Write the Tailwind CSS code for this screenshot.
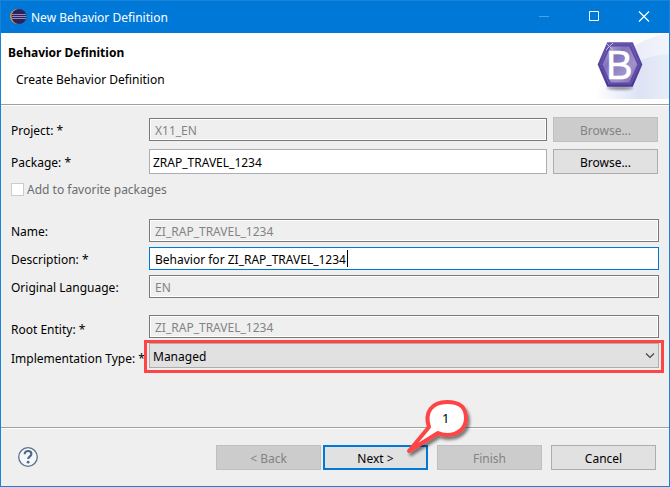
<!DOCTYPE html>
<html lang="en">
<head>
<meta charset="utf-8">
<meta name="viewport" content="width=device-width, initial-scale=1">
<title>New Behavior Definition</title>
<script src="https://cdn.jsdelivr.net/npm/@tailwindcss/browser@4"></script>
</head>
<body class="flex min-h-screen flex-col border border-[#1883d7] bg-[#efefef] font-['Noto_Sans',sans-serif] text-[12px] leading-[16px] text-black">

<header class="flex h-8 items-center bg-[#0078d7] pl-2 text-white">
  <svg class="mr-1 size-[18px]" viewBox="0 0 18 18" aria-hidden="true">
    <circle cx="8.500" cy="8.500" r="7.500" fill="#d98e48"/>
    <circle cx="10" cy="8.500" r="7.500" fill="#2c2255"/>
    <path d="M3 6.500h14M2.500 8.500h15M3 10.500h14" stroke="#8d8bbd" stroke-width="1"/>
  </svg>
  <h1 class="grow pt-0.5">New Behavior Definition</h1>
  <button type="button" aria-label="Minimize" disabled class="flex h-8 w-[50px] items-center justify-center">
    <svg class="size-3" viewBox="0 0 12 12" fill="none" stroke="#4ba0e6"><path d="M1 5.500h10"/></svg>
  </button>
  <button type="button" aria-label="Maximize" class="flex h-8 w-[50px] items-center justify-center">
    <svg class="size-3" viewBox="0 0 12 12" fill="none" stroke="#fff"><path d="M1.500 .5h9v9h-9z"/></svg>
  </button>
  <button type="button" aria-label="Close" class="flex h-8 w-[50px] items-center justify-center">
    <svg class="size-3" viewBox="0 0 12 12" fill="none" stroke="#fff" stroke-width="1.200"><path d="M1 .5l10 10M11 .5L1 10.500"/></svg>
  </button>
</header>

<section class="flex justify-between border-b border-[#a0a0a0] bg-white">
  <div class="pt-3 pl-[7px]">
    <h2 class="font-bold">Behavior Definition</h2>
    <p class="mt-[11px] pl-2">Create Behavior Definition</p>
  </div>
  <svg class="mb-[5px] h-[66px] w-[75px]" viewBox="0 0 75 66" aria-hidden="true">
    <defs>
      <linearGradient id="haze" x1="0" x2="1"><stop offset="0" stop-color="#fff"/><stop offset=".6" stop-color="#dde3f5"/><stop offset="1" stop-color="#e9edf9"/></linearGradient>
      <linearGradient id="rim" x1="0" y1="0" x2="0" y2="1"><stop offset="0" stop-color="#6650ad"/><stop offset="1" stop-color="#4b3794"/></linearGradient>
      <linearGradient id="face" x1="0" y1="0" x2="1" y2="1"><stop offset="0" stop-color="#c5bddf"/><stop offset=".35" stop-color="#8173bd"/><stop offset=".65" stop-color="#9f93cd"/><stop offset="1" stop-color="#6b57ac"/></linearGradient>
      <filter id="soft" x="-30%" y="-100%" width="160%" height="300%"><feGaussianBlur stdDeviation="1.200"/></filter>
    </defs>
    <path d="M0 66C9 40 25 10 75 0V66z" fill="url(#haze)" opacity=".6"/>
    <path d="M1 66C16 42 38 24 75 21V66z" fill="url(#haze)"/>
    <ellipse cx="26" cy="55" rx="13" ry="2" fill="#4b4b5a" opacity=".55" filter="url(#soft)"/>
    <path d="M14 10.500h24L47 31.500 38 52.500H14L5 31.500z" fill="url(#face)" stroke="url(#rim)" stroke-width="2.500"/>
    <path d="M16 12.500h20l8.500 19-8.500 19H16L7.500 31.500z" fill="none" stroke="#5d4aa4" stroke-width="2"/>
    <text x="12" y="45.500" font-family="Liberation Sans, sans-serif" font-size="40" fill="#fff" stroke="#fff" stroke-width=".5">B</text>
    <path d="M12 10l7 7M19 10l-7 7" stroke="#c9c1e5" stroke-width="1"/>
  </svg>
</section>

<form class="flex grow flex-col border-t border-white">
  <div class="grow px-[10px] pt-[11px] pb-[58px]">
    <div class="flex items-center">
      <label for="project" class="w-[138px] shrink-0 pt-0.5">Project: *</label>
      <input id="project" value="X11_EN" disabled class="h-[23px] min-w-0 grow border border-[#7a7a7a] bg-[#efefef] px-[5px] pt-0.5 text-[#838383] inset-ring inset-ring-white">
      <button type="button" disabled class="mr-px ml-1.5 h-[25px] w-[105px] shrink-0 border border-[#bfbfbf] bg-[#cccccc] pt-0.5 text-[#838383]">Browse...</button>
    </div>
    <div class="mt-[7px] flex items-center">
      <label for="package" class="w-[138px] shrink-0 pt-0.5">Package: *</label>
      <input id="package" value="ZRAP_TRAVEL_1234" class="h-[25px] min-w-0 grow border border-[#abadb3] bg-white px-[3px] pt-0.5">
      <button type="button" class="mr-px ml-1.5 h-[25px] w-[105px] shrink-0 border border-[#adadad] bg-[#e1e1e1] pt-0.5">Browse...</button>
    </div>
    <div class="mt-1.5 flex items-center">
      <input id="favorite" type="checkbox" disabled class="size-[13px] appearance-none border border-[#cccccc] bg-white">
      <label for="favorite" class="pt-0.5 pl-[3px] text-[#6d6d6d]">Add to favorite packages</label>
    </div>

    <div class="mt-[21px] grid grid-cols-[138px_minmax(0,1fr)] items-center gap-y-[5px]">
      <label for="name" class="pt-0.5">Name:</label>
      <input id="name" value="ZI_RAP_TRAVEL_1234" disabled class="h-[23px] border border-[#7a7a7a] bg-[#efefef] px-[5px] pt-0.5 text-[#838383] inset-ring inset-ring-white">
      <label for="description" class="pt-0.5">Description: *</label>
      <div class="relative flex">
        <input id="description" value="Behavior for ZI_RAP_TRAVEL_1234" class="h-[23px] w-full border border-[#0078d7] bg-white px-[5px] pt-0.5 outline-none">
        <span class="absolute top-[3px] left-[198px] h-[17px] w-px bg-black"></span>
      </div>
      <label for="language" class="pt-0.5">Original Language:</label>
      <input id="language" value="EN" disabled class="h-[23px] border border-[#7a7a7a] bg-[#efefef] px-[5px] pt-0.5 text-[#838383] inset-ring inset-ring-white">
    </div>

    <div class="mt-[17px] grid grid-cols-[138px_minmax(0,1fr)] items-center gap-y-[5px]">
      <label for="root" class="pt-1.5">Root Entity: *</label>
      <input id="root" value="ZI_RAP_TRAVEL_1234" disabled class="h-[23px] border border-[#7a7a7a] bg-[#efefef] px-[5px] pt-0.5 text-[#838383] inset-ring inset-ring-white">
      <label for="type" class="pt-1.5 whitespace-nowrap">Implementation Type: *</label>
      <div class="relative flex">
        <select id="type" class="h-[25px] w-full appearance-none border border-[#adadad] bg-[#e1e1e1] px-[3px] pt-0.5">
          <option>Managed</option>
        </select>
        <svg class="pointer-events-none absolute top-[9px] right-1 h-2 w-[10px]" viewBox="0 0 10 8" fill="none" stroke="#444" stroke-width="1.200"><path d="M1 1.500l4 4 4-4"/></svg>
        <div class="pointer-events-none absolute -top-[3px] -right-[5px] -bottom-[5px] -left-[5px] border-3 border-[#fe4445]"></div>
      </div>
    </div>
  </div>

  <footer class="flex items-center border-t border-[#a0a0a0] pt-[17px] pr-[13px] pb-4 pl-4 inset-shadow-[0_1px_0_#fff]">
    <button type="button" aria-label="Help">
      <svg class="size-[22px]" viewBox="0 0 22 22" aria-hidden="true">
        <circle cx="11" cy="10" r="9.300" fill="#f6f7f9" stroke="#5c7090" stroke-width="1.300"/>
        <path d="M7.700 7.200c0-2.200 1.400-3.200 3.400-3.200s3.300 1.100 3.300 2.900c0 2.500-3.200 2.500-3.200 5.200" fill="none" stroke="#52678c" stroke-width="2.200"/>
        <circle cx="11.100" cy="15.200" r="1.400" fill="#52678c"/>
      </svg>
    </button>
    <div class="ml-auto flex">
      <button type="button" disabled class="h-[25px] w-[105px] border border-[#bfbfbf] bg-[#cccccc] pt-0.5 text-[#838383]">&lt; Back</button>
      <div class="relative ml-0.5">
        <button type="submit" class="h-[25px] w-[105px] border-2 border-[#0078d7] bg-[#e1e1e1] pt-0.5">Next &gt;</button>
        <svg class="pointer-events-none absolute -top-[50px] left-[77px] z-10 h-[65px] w-[76px]" viewBox="0 0 76 65" aria-hidden="true">
          <defs><filter id="drop" x="-20%" y="-20%" width="150%" height="150%"><feDropShadow dx="2" dy="3" stdDeviation="1.800" flood-opacity=".5"/></filter></defs>
          <path d="M29 32C24 17 32 7 47 7S66 14 66 23.500 58 40 47 40q-5 0-9-2L9 56z" fill="#fff" stroke="#fe4445" stroke-width="4" stroke-linejoin="round" filter="url(#drop)"/>
        </svg>
        <span class="pointer-events-none absolute -top-[35px] left-[119px] z-20 text-[13px]">1</span>
      </div>
      <button type="button" disabled class="ml-[9px] h-[25px] w-[105px] border border-[#bfbfbf] bg-[#cccccc] pt-0.5 text-[#838383]">Finish</button>
      <button type="button" class="ml-[9px] h-[25px] w-[105px] border border-[#adadad] bg-[#e1e1e1] pt-0.5">Cancel</button>
    </div>
  </footer>
</form>
</body>
</html>
